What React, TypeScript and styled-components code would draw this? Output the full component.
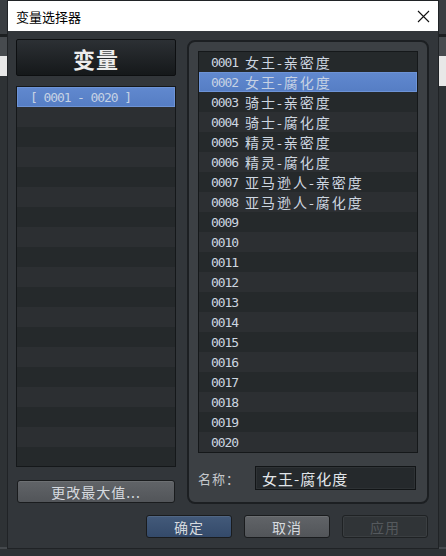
import React from "react";
import styled, { createGlobalStyle } from "styled-components";

const GlobalStyle = createGlobalStyle`
  html, body {
    margin: 0;
    padding: 0;
    background: #2e3235;
  }
  * {
    box-sizing: border-box;
  }
`;

const CJK = `"Noto Sans CJK SC", "Noto Sans", sans-serif`;
const MONO = `"DejaVu Sans Mono", "Noto Sans CJK SC", monospace`;

// the editor window that sits behind the dialog
const Desktop = styled.div`
  width: 446px;
  height: 556px;
  padding: 1px 8px 0 8px;
  overflow: hidden;
  background:
    linear-gradient(#e8e8e8, #e8e8e8) 0 56px / 8px 20px no-repeat,
    linear-gradient(#e8e8e8, #e8e8e8) 438px 56px / 8px 30px no-repeat,
    linear-gradient(#474b4f, #474b4f) 0 37px / 100% 19px no-repeat,
    linear-gradient(#1c1f21, #1c1f21) 0 34px / 100% 3px no-repeat,
    linear-gradient(#3a3e42, #3a3e42) 0 0 / 100% 34px no-repeat,
    linear-gradient(#45494d, #45494d) 0 547px / 100% 2px no-repeat,
    #2e3235;
`;

const Dialog = styled.div`
  width: 430px;
  height: 547px;
  display: flex;
  flex-direction: column;
  background: #32363a;
  box-shadow: 0 0 0 1px #202326;
`;

const TitleBar = styled.div`
  height: 30px;
  flex: none;
  background: #ffffff;
  display: flex;
  align-items: center;
  justify-content: space-between;
  padding: 0 8px 0 8px;
  font-family: ${CJK};
  font-size: 13px;
  color: #000;
`;

const CloseButton = styled.div`
  width: 14px;
  height: 14px;
  display: flex;
  align-items: center;
  justify-content: center;
`;

const Body = styled.div`
  display: grid;
  grid-template-columns: 160px 242px;
  column-gap: 11px;
  padding: 8px 9px 0 8px;
`;

const LeftColumn = styled.div`
  display: flex;
  flex-direction: column;
  gap: 10px;
`;

const Heading = styled.div`
  height: 37px;
  border: 1px solid #0d0f11;
  border-radius: 2px;
  background: linear-gradient(#2c3034, #15181a);
  display: flex;
  align-items: center;
  justify-content: center;
  font-family: ${CJK};
  font-size: 22px;
  font-weight: 700;
  color: #ececec;
  letter-spacing: 1px;
`;

const List = styled.div<{ $height: number }>`
  height: ${(p) => p.$height}px;
  flex: none;
  border: 1px solid #15181a;
  background: repeating-linear-gradient(
    #25292b 0px,
    #25292b 20px,
    #2c2f32 20px,
    #2c2f32 40px
  );
  overflow: hidden;
`;

const Row = styled.div<{ $selected?: boolean; $indent: number }>`
  height: 20px;
  display: flex;
  align-items: center;
  padding-left: ${(p) => p.$indent}px;
  color: ${(p) => (p.$selected ? "#c6d2e4" : "#cdd6e0")};
  background: ${(p) =>
    p.$selected ? "linear-gradient(#6189cf, #557dc4)" : "transparent"};
  box-shadow: ${(p) => (p.$selected ? "inset 0 0 0 1px #6d93d6" : "none")};
  white-space: pre;
`;

const Code = styled.span`
  font-family: ${MONO};
  font-size: 13px;
  letter-spacing: -1.1px;
`;

const Name = styled.span`
  font-family: ${CJK};
  font-size: 14px;
  letter-spacing: 2px;
  margin-left: 7px;
`;

const Button = styled.div<{ $kind: "plain" | "primary" | "disabled" }>`
  height: 23px;
  flex: none;
  border-radius: 3px;
  display: flex;
  align-items: center;
  justify-content: center;
  font-family: ${CJK};
  font-size: 14px;
  letter-spacing: 1px;
  border: 1px solid
    ${(p) => (p.$kind === "disabled" ? "#1f2224" : "#1a1c1e")};
  color: ${(p) => (p.$kind === "disabled" ? "#55595d" : "#d6dadf")};
  background: ${(p) =>
    p.$kind === "primary"
      ? "linear-gradient(#435a7a, #344a6a)"
      : p.$kind === "plain"
      ? "linear-gradient(#616468, #525559)"
      : "#303437"};
  box-shadow: ${(p) =>
    p.$kind === "disabled"
      ? "inset 0 0 0 1px #3a3e41"
      : "inset 0 1px 0 rgba(255,255,255,0.08)"};
`;

const MaxButton = styled(Button)`
  margin: 3px 1px 0;
`;

const Panel = styled.div`
  margin-top: 1px;
  height: 464px;
  border: 2px solid #1c1f22;
  border-radius: 8px;
  background: #3c4044;
  padding: 9px 9px 0 9px;
  display: flex;
  flex-direction: column;
`;

const NameRow = styled.div`
  margin-top: 13px;
  display: flex;
  align-items: center;
`;

const Label = styled.div`
  width: 57px;
  font-family: ${CJK};
  font-size: 13px;
  letter-spacing: 1px;
  color: #c4c8cc;
`;

const NameInput = styled.div`
  width: 161px;
  height: 24px;
  border: 1px solid #121517;
  background: #25292c;
  box-shadow: inset 0 0 0 1px #2e3235;
  padding-left: 6px;
  display: flex;
  align-items: center;
  font-family: ${CJK};
  font-size: 15px;
  letter-spacing: 1px;
  color: #e2e6ea;
`;

const Footer = styled.div`
  display: flex;
  justify-content: flex-end;
  gap: 12px;
  padding: 11px 10px 0 0;
`;

const FooterButton = styled(Button)`
  width: 86px;
`;

const names = [
  "女王-亲密度",
  "女王-腐化度",
  "骑士-亲密度",
  "骑士-腐化度",
  "精灵-亲密度",
  "精灵-腐化度",
  "亚马逊人-亲密度",
  "亚马逊人-腐化度",
];

const variables = Array.from({ length: 20 }, (_, i) => ({
  code: String(i + 1).padStart(4, "0"),
  name: names[i] ?? "",
}));

export default function App() {
  return (
    <>
      <GlobalStyle />
      <Desktop>
        <Dialog>
          <TitleBar>
            <span>变量选择器</span>
            <CloseButton>
              <svg width="13" height="13" viewBox="0 0 13 13">
                <path
                  d="M1 1 L12 12 M12 1 L1 12"
                  stroke="#111"
                  strokeWidth="1.1"
                  fill="none"
                />
              </svg>
            </CloseButton>
          </TitleBar>
          <Body>
            <LeftColumn>
              <Heading>变量</Heading>
              <List $height={381}>
                <Row $selected $indent={13}>
                  <Code>[ 0001 - 0020 ]</Code>
                </Row>
              </List>
              <MaxButton $kind="plain">更改最大值...</MaxButton>
            </LeftColumn>
            <Panel>
              <List $height={402}>
                {variables.map((v, i) => (
                  <Row key={v.code} $indent={12} $selected={i === 1}>
                    <Code>{v.code}</Code>
                    {v.name && <Name>{v.name}</Name>}
                  </Row>
                ))}
              </List>
              <NameRow>
                <Label>名称：</Label>
                <NameInput>女王-腐化度</NameInput>
              </NameRow>
            </Panel>
          </Body>
          <Footer>
            <FooterButton $kind="primary">确定</FooterButton>
            <FooterButton $kind="plain">取消</FooterButton>
            <FooterButton $kind="disabled">应用</FooterButton>
          </Footer>
        </Dialog>
      </Desktop>
    </>
  );
}
